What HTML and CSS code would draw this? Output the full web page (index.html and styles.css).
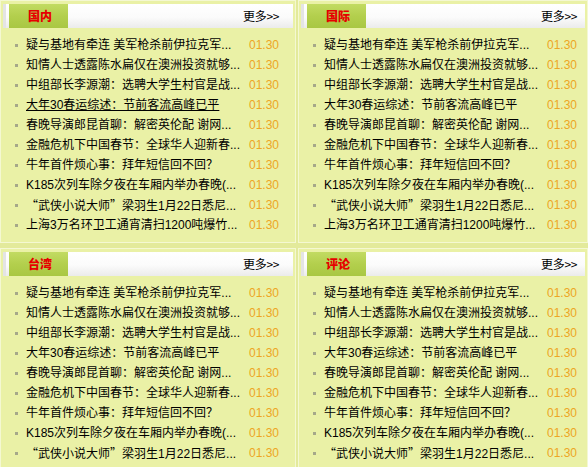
FILE: index.html
```html
<!DOCTYPE html>
<html lang="zh-CN">
<head>
<meta charset="utf-8">
<title>新闻</title>
<link rel="stylesheet" href="styles.css">
</head>
<body>
<div class="grid">
  <section class="panel">
    <div class="head"><span class="tab">国内</span><a class="more">更多&gt;&gt;</a></div>
    <ul class="list">
      <li class="row"><i class="dot"></i><span class="title">疑与基地有牵连 美军枪杀前伊拉克军...</span><span class="date">01.30</span></li>
      <li class="row"><i class="dot"></i><span class="title">知情人士透露陈水扁仅在澳洲投资就够...</span><span class="date">01.30</span></li>
      <li class="row"><i class="dot"></i><span class="title">中组部长李源潮：选聘大学生村官是战...</span><span class="date">01.30</span></li>
      <li class="row"><i class="dot"></i><span class="title hover">大年30春运综述：节前客流高峰已平</span><span class="date">01.30</span></li>
      <li class="row"><i class="dot"></i><span class="title">春晚导演郎昆首聊：解密英伦配 谢网...</span><span class="date">01.30</span></li>
      <li class="row"><i class="dot"></i><span class="title">金融危机下中国春节：全球华人迎新春...</span><span class="date">01.30</span></li>
      <li class="row"><i class="dot"></i><span class="title">牛年首件烦心事：拜年短信回不回？</span><span class="date">01.30</span></li>
      <li class="row"><i class="dot"></i><span class="title">K185次列车除夕夜在车厢内举办春晚(...</span><span class="date">01.30</span></li>
      <li class="row"><i class="dot"></i><span class="title"><span class="q">“</span>武侠小说大师<span class="q">”</span>梁羽生1月22日悉尼...</span><span class="date">01.30</span></li>
      <li class="row"><i class="dot"></i><span class="title">上海3万名环卫工通宵清扫1200吨爆竹...</span><span class="date">01.30</span></li>
    </ul>
  </section>
  <section class="panel">
    <div class="head"><span class="tab">国际</span><a class="more">更多&gt;&gt;</a></div>
    <ul class="list">
      <li class="row"><i class="dot"></i><span class="title">疑与基地有牵连 美军枪杀前伊拉克军...</span><span class="date">01.30</span></li>
      <li class="row"><i class="dot"></i><span class="title">知情人士透露陈水扁仅在澳洲投资就够...</span><span class="date">01.30</span></li>
      <li class="row"><i class="dot"></i><span class="title">中组部长李源潮：选聘大学生村官是战...</span><span class="date">01.30</span></li>
      <li class="row"><i class="dot"></i><span class="title">大年30春运综述：节前客流高峰已平</span><span class="date">01.30</span></li>
      <li class="row"><i class="dot"></i><span class="title">春晚导演郎昆首聊：解密英伦配 谢网...</span><span class="date">01.30</span></li>
      <li class="row"><i class="dot"></i><span class="title">金融危机下中国春节：全球华人迎新春...</span><span class="date">01.30</span></li>
      <li class="row"><i class="dot"></i><span class="title">牛年首件烦心事：拜年短信回不回？</span><span class="date">01.30</span></li>
      <li class="row"><i class="dot"></i><span class="title">K185次列车除夕夜在车厢内举办春晚(...</span><span class="date">01.30</span></li>
      <li class="row"><i class="dot"></i><span class="title"><span class="q">“</span>武侠小说大师<span class="q">”</span>梁羽生1月22日悉尼...</span><span class="date">01.30</span></li>
      <li class="row"><i class="dot"></i><span class="title">上海3万名环卫工通宵清扫1200吨爆竹...</span><span class="date">01.30</span></li>
    </ul>
  </section>
  <section class="panel">
    <div class="head"><span class="tab">台湾</span><a class="more">更多&gt;&gt;</a></div>
    <ul class="list">
      <li class="row"><i class="dot"></i><span class="title">疑与基地有牵连 美军枪杀前伊拉克军...</span><span class="date">01.30</span></li>
      <li class="row"><i class="dot"></i><span class="title">知情人士透露陈水扁仅在澳洲投资就够...</span><span class="date">01.30</span></li>
      <li class="row"><i class="dot"></i><span class="title">中组部长李源潮：选聘大学生村官是战...</span><span class="date">01.30</span></li>
      <li class="row"><i class="dot"></i><span class="title">大年30春运综述：节前客流高峰已平</span><span class="date">01.30</span></li>
      <li class="row"><i class="dot"></i><span class="title">春晚导演郎昆首聊：解密英伦配 谢网...</span><span class="date">01.30</span></li>
      <li class="row"><i class="dot"></i><span class="title">金融危机下中国春节：全球华人迎新春...</span><span class="date">01.30</span></li>
      <li class="row"><i class="dot"></i><span class="title">牛年首件烦心事：拜年短信回不回？</span><span class="date">01.30</span></li>
      <li class="row"><i class="dot"></i><span class="title">K185次列车除夕夜在车厢内举办春晚(...</span><span class="date">01.30</span></li>
      <li class="row"><i class="dot"></i><span class="title"><span class="q">“</span>武侠小说大师<span class="q">”</span>梁羽生1月22日悉尼...</span><span class="date">01.30</span></li>
    </ul>
  </section>
  <section class="panel">
    <div class="head"><span class="tab">评论</span><a class="more">更多&gt;&gt;</a></div>
    <ul class="list">
      <li class="row"><i class="dot"></i><span class="title">疑与基地有牵连 美军枪杀前伊拉克军...</span><span class="date">01.30</span></li>
      <li class="row"><i class="dot"></i><span class="title">知情人士透露陈水扁仅在澳洲投资就够...</span><span class="date">01.30</span></li>
      <li class="row"><i class="dot"></i><span class="title">中组部长李源潮：选聘大学生村官是战...</span><span class="date">01.30</span></li>
      <li class="row"><i class="dot"></i><span class="title">大年30春运综述：节前客流高峰已平</span><span class="date">01.30</span></li>
      <li class="row"><i class="dot"></i><span class="title">春晚导演郎昆首聊：解密英伦配 谢网...</span><span class="date">01.30</span></li>
      <li class="row"><i class="dot"></i><span class="title">金融危机下中国春节：全球华人迎新春...</span><span class="date">01.30</span></li>
      <li class="row"><i class="dot"></i><span class="title">牛年首件烦心事：拜年短信回不回？</span><span class="date">01.30</span></li>
      <li class="row"><i class="dot"></i><span class="title">K185次列车除夕夜在车厢内举办春晚(...</span><span class="date">01.30</span></li>
      <li class="row"><i class="dot"></i><span class="title"><span class="q">“</span>武侠小说大师<span class="q">”</span>梁羽生1月22日悉尼...</span><span class="date">01.30</span></li>
    </ul>
  </section>
</div>
</body>
</html>
```
FILE: styles.css
```css
html, body {
  margin: 0;
  padding: 0;
  background: #e3ea9b;
  font-family: "Liberation Sans", "Noto Sans CJK SC", sans-serif;
  font-size: 12px;
  color: #000;
  overflow: hidden;
}
.grid {
  display: grid;
  grid-template-columns: 296px 290px;
  column-gap: 2px;
  row-gap: 5px;
  align-items: start;
}
.panel {
  background: #eaf1a6;
  border: 1px solid #f4f8d2;
  padding: 3px 2px 7px 2px;
}
.head {
  display: flex;
  align-items: center;
  height: 24px;
  background: linear-gradient(to bottom, #ffffff 0%, #fbfbfb 55%, #ebebeb 100%);
  box-shadow: inset 3px 0 0 #e4e4e4;
}
.tab {
  margin-left: 6px;
  width: 59px;
  height: 24px;
  box-sizing: border-box;
  padding-left: 3px;
  line-height: 24px;
  text-align: center;
  background: linear-gradient(to bottom, #c2db62 0%, #b3cf4d 50%, #a9c743 100%);
  color: #e60000;
  font-family: "Noto Sans CJK SC", sans-serif;
  font-weight: 900;
  font-size: 12px;
}
.more {
  margin-left: 175px;
  color: #000;
  font-family: "Noto Sans CJK SC", sans-serif;
  font-size: 12px;
  line-height: 24px;
  letter-spacing: -0.3px;
}
.list {
  list-style: none;
  margin: 0;
  padding: 7px 0 0 0;
}
.row {
  display: flex;
  align-items: center;
  height: 20px;
  padding-left: 12px;
  white-space: nowrap;
}
.dot {
  width: 3px;
  height: 3px;
  background: #a6a889;
  margin-right: 8px;
  flex: none;
}
.title {
  width: 223px;
  flex: none;
  overflow: hidden;
  line-height: 20px;
}
.q {
  font-family: "Noto Sans CJK SC", sans-serif;
}
.hover {
  text-decoration: underline;
}
.date {
  font-family: "Liberation Sans", Arial, sans-serif;
  font-size: 12px;
  color: #eda624;
}
```
